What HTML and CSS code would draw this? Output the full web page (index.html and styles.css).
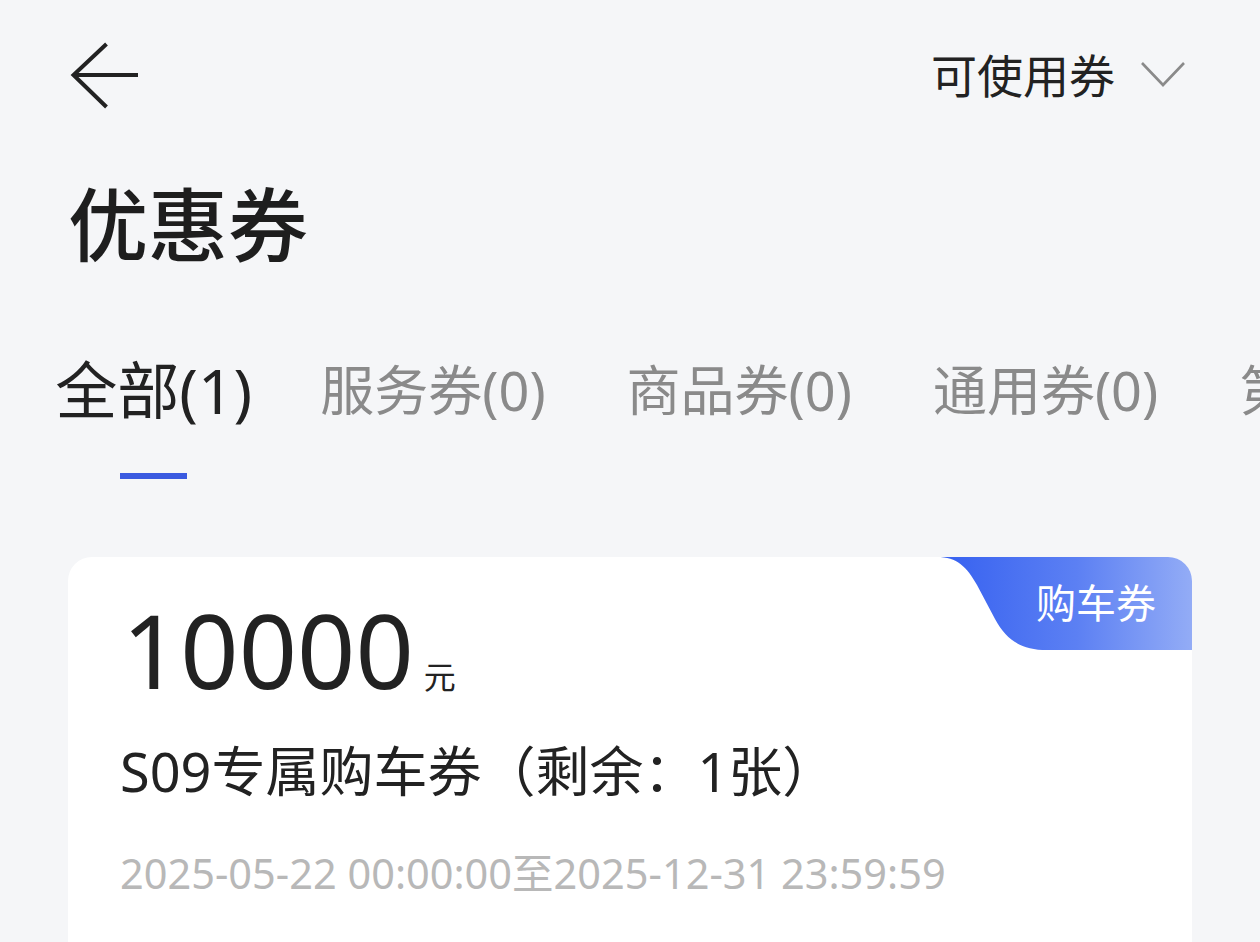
FILE: index.html
```html
<!DOCTYPE html>
<html lang="zh-CN">
<head>
    <meta charset="UTF-8">
    <meta name="viewport" content="width=device-width, initial-scale=1.0">
    <title>优惠券</title>
    <link rel="stylesheet" href="styles.css">
</head>
<body>
    <div class="page">
        <div class="header">
            <svg class="back-icon" width="72" height="70" viewBox="0 0 72 70">
                <path d="M38.5 4 L5.5 35 L38.5 67 M5.5 35 H70" fill="none" stroke="#222" stroke-width="4"/>
            </svg>
            <div class="filter">
                <span>可使用券</span>
                <svg class="chevron" width="52" height="30" viewBox="0 0 52 30">
                    <path d="M2 3 L23 25 L44 3" fill="none" stroke="#8a8a8a" stroke-width="2.6"/>
                </svg>
            </div>
        </div>

        <h1 class="title">优惠券</h1>

        <div class="tabs">
            <div class="tab active">
                <span class="tab-label">全部(1)</span>
                <span class="tab-line"></span>
            </div>
            <div class="tab"><span class="tab-label">服务券(0)</span></div>
            <div class="tab"><span class="tab-label">商品券(0)</span></div>
            <div class="tab"><span class="tab-label">通用券(0)</span></div>
            <div class="tab"><span class="tab-label">第三方券(0)</span></div>
        </div>

        <div class="coupon">
            <div class="coupon-tag">
                <svg class="tag-bg" width="255" height="93" viewBox="0 0 255 93">
                    <defs>
                        <linearGradient id="tagGrad" x1="0" y1="0" x2="1" y2="0">
                            <stop offset="0" stop-color="#3560f0"/>
                            <stop offset="0.55" stop-color="#5c80f3"/>
                            <stop offset="1" stop-color="#93acf6"/>
                        </linearGradient>
                    </defs>
                    <path d="M0 0 C20 0 30 10 40 28 L58 62 C70 84 85 93 110 93 H255 V0 Z" fill="url(#tagGrad)"/>
                </svg>
                <span class="tag-text">购车券</span>
            </div>

            <div class="amount">
                <span class="amount-num">10000</span>
                <span class="amount-unit">元</span>
            </div>
            <div class="coupon-name">S09专属购车券（剩余：1张）</div>
            <div class="coupon-date">2025-05-22 00:00:00至2025-12-31 23:59:59</div>
        </div>
    </div>
</body>
</html>
```

FILE: styles.css
```css
html, body {
    margin: 0;
    height: 100%;
}

body {
    font-family: "Noto Sans", "Noto Sans CJK SC", sans-serif;
    background-color: #f5f6f8;
    color: #222;
    overflow: hidden;
}

.page {
    padding: 40px 68px 0 68px;
}

.header {
    display: flex;
    align-items: center;
    justify-content: space-between;
    height: 70px;
}

.back-icon {
    display: block;
}

.filter {
    display: flex;
    align-items: center;
    gap: 25px;
    font-size: 46px;
    line-height: 1;
}

.chevron {
    display: block;
}

.title {
    margin: 74px 0 0 0;
    font-size: 80px;
    font-weight: 500;
    line-height: 1;
    color: #1e1e1e;
}

/* tab strip runs to the screen edge and is cut there */
.tabs {
    display: flex;
    gap: 81px;
    margin: 84px -68px 0 -68px;
    padding: 10px 0 0 68px;
    white-space: nowrap;
    overflow: hidden;
}

.tab {
    display: flex;
    flex-direction: column;
    align-items: center;
    flex-shrink: 0;
    font-size: 54px;
    line-height: 1.2;
    color: #8a8a8a;
}

.tab.active {
    color: #222;
}

.tab.active .tab-label {
    transform: scale(1.15);
}

.tab-label {
    display: block;
}

.tab-line {
    display: block;
    width: 67px;
    height: 6px;
    margin-top: 50px;
    background-color: #3a5ae0;
}

.coupon {
    position: relative;
    margin-top: 78px;
    padding: 42px 52px 120px 52px;
    background-color: #fff;
    border-radius: 24px;
    overflow: hidden;
}

.coupon-tag {
    position: absolute;
    top: 0;
    right: 0;
    width: 255px;
    height: 93px;
}

.tag-bg {
    position: absolute;
    top: 0;
    left: 0;
}

.tag-text {
    position: absolute;
    top: 22px;
    right: 36px;
    font-size: 40px;
    line-height: 1.2;
    color: #fff;
}

.amount {
    display: flex;
    align-items: baseline;
    line-height: 1;
}

.amount-num {
    font-size: 102px;
    margin-left: 2px;
}

.amount-unit {
    margin-left: 10px;
    font-size: 32px;
}

.coupon-name {
    margin-top: 43px;
    font-size: 54px;
    line-height: 1;
}

.coupon-date {
    margin-top: 55px;
    font-size: 41.5px;
    line-height: 1;
    color: #b8b8b8;
}
```
